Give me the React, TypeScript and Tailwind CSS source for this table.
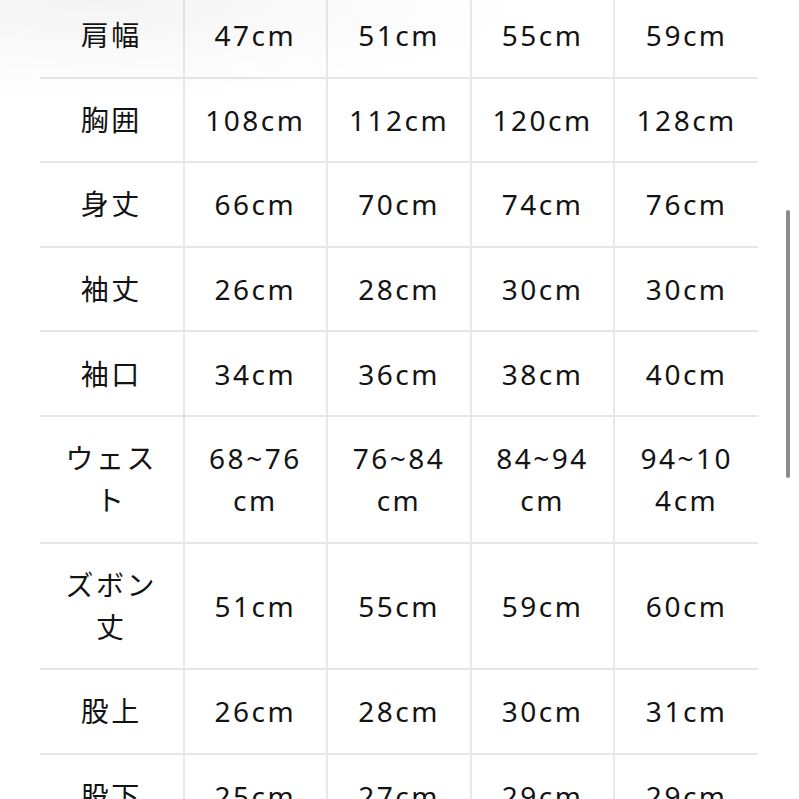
const SIZES: [string, string, string, string, string][] = [
  ["肩幅", "47cm", "51cm", "55cm", "59cm"],
  ["胸囲", "108cm", "112cm", "120cm", "128cm"],
  ["身丈", "66cm", "70cm", "74cm", "76cm"],
  ["袖丈", "26cm", "28cm", "30cm", "30cm"],
  ["袖口", "34cm", "36cm", "38cm", "40cm"],
  ["ウェスト", "68~76cm", "76~84cm", "84~94cm", "94~104cm"],
  ["ズボン丈", "51cm", "55cm", "59cm", "60cm"],
  ["股上", "26cm", "28cm", "30cm", "31cm"],
  ["股下", "25cm", "27cm", "29cm", "29cm"],
];

export default function App() {
  return (
    <div
      className="relative h-[799px] w-full overflow-hidden bg-white text-[#131313]"
      style={{ fontFamily: '"Noto Sans", "Noto Sans CJK JP", sans-serif' }}
    >
      <div className="-mt-[6px] pl-[40px] pr-[41px]">
        <table className="w-full table-fixed border-collapse">
          <tbody>
            {SIZES.map((row) => (
              <tr key={row[0]} className="border-b-2 border-[#e6e6e6]">
                {row.map((cell, i) => (
                  <td
                    key={i}
                    className={`break-all px-[19px] py-[20.3px] text-center align-middle text-[28px] leading-[42px] tracking-[2.5px] ${
                      i > 0 ? "border-l-2 border-[#e8e8e8]" : ""
                    }`}
                  >
                    {cell}
                  </td>
                ))}
              </tr>
            ))}
          </tbody>
        </table>
      </div>

      {/* soft shading from the photo, top left */}
      <div className="pointer-events-none absolute inset-0 bg-[radial-gradient(ellipse_55%_13%_at_12%_0%,rgba(0,0,0,0.045),transparent)]" />

      {/* scrollbar thumb */}
      <div className="absolute left-[786px] top-[210px] h-[268px] w-[4px] rounded-full bg-[#8c8c8c]" />
    </div>
  );
}
